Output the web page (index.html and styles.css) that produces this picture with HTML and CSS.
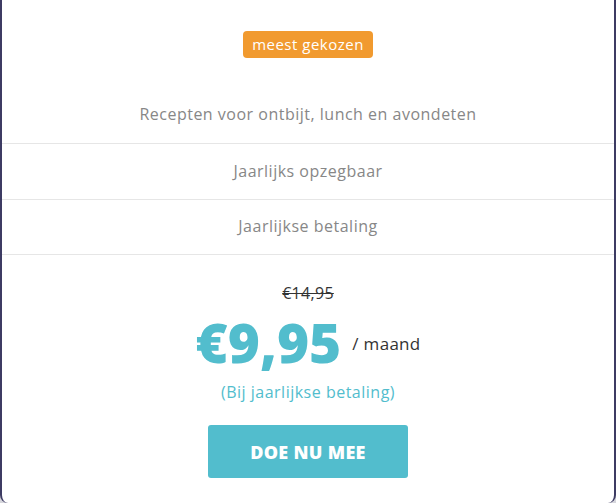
FILE: index.html
```html
<!DOCTYPE html>
<html lang="nl">
<head>
<meta charset="utf-8">
<title>Abonnement</title>
<link rel="stylesheet" href="styles.css">
</head>
<body>
<div class="card">
  <div class="badge-wrap"><span class="badge">meest gekozen</span></div>
  <ul class="features">
    <li>Recepten voor ontbijt, lunch en avondeten</li>
    <li>Jaarlijks opzegbaar</li>
    <li>Jaarlijkse betaling</li>
  </ul>
  <div class="pricing">
    <div class="old">€14,95</div>
    <div class="price"><span class="amount">€9,95</span><span class="per">/ maand</span></div>
    <div class="note">(Bij jaarlijkse betaling)</div>
    <a class="cta" href="#">DOE NU MEE</a>
  </div>
</div>
</body>
</html>
```
FILE: styles.css
```css
html, body {
  margin: 0;
  padding: 0;
  background: #d6d6dc;
}
body {
  font-family: "Open Sans", "Liberation Sans", sans-serif;
}
.card {
  box-sizing: border-box;
  width: 616px;
  height: 503px;
  background: #fff;
  border-left: 2px solid #3d3b63;
  border-right: 2px solid #3d3b63;
  border-radius: 0 0 8px 8px;
  overflow: hidden;
}
.badge-wrap {
  display: flex;
  justify-content: center;
  padding: 31px 0 29px;
}
.badge {
  display: block;
  height: 27px;
  line-height: 27px;
  padding: 0 9px;
  background: #f19a2f;
  color: #fff;
  font-size: 15px;
  letter-spacing: 0.5px;
  border-radius: 4px;
}
.features {
  list-style: none;
  margin: 0;
  padding: 0;
}
.features li {
  box-sizing: border-box;
  height: 56px;
  padding-bottom: 2px;
  display: flex;
  align-items: center;
  justify-content: center;
  color: #878787;
  font-size: 16px;
  letter-spacing: 0.5px;
  border-bottom: 1px solid #e6e6e6;
}
.features li:first-child {
  height: 57px;
}
.features li:nth-child(3) {
  height: 55px;
}
.pricing {
  display: flex;
  flex-direction: column;
  align-items: center;
  padding-top: 28px;
}
.old {
  color: #333;
  font-size: 16px;
  letter-spacing: 0.3px;
  text-decoration: line-through;
  line-height: 20px;
}
.price {
  display: flex;
  align-items: center;
  gap: 11px;
  margin-top: 9px;
}
.amount {
  color: #52bdcd;
  font-size: 55px;
  font-weight: 800;
  line-height: 60px;
}
.per {
  color: #333;
  font-size: 17px;
  letter-spacing: 0.3px;
  line-height: 20px;
  margin-top: 4px;
}
.note {
  color: #52bdcd;
  font-size: 16px;
  letter-spacing: 0.5px;
  line-height: 24px;
  margin-top: 8px;
}
.cta {
  display: flex;
  align-items: center;
  justify-content: center;
  width: 200px;
  height: 53px;
  margin-top: 21px;
  background: #52bdcd;
  color: #fff;
  font-size: 18px;
  font-weight: 800;
  letter-spacing: 0.3px;
  text-decoration: none;
  border-radius: 3px;
}
```
